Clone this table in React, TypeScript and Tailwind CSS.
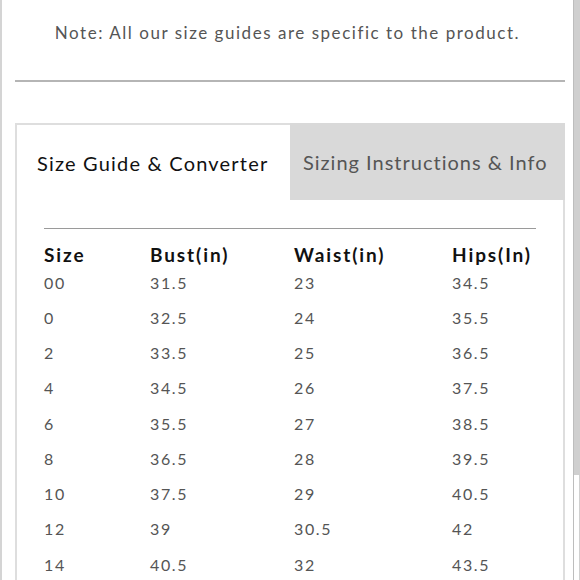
const rows: [string, string, string, string][] = [
  ["00", "31.5", "23", "34.5"],
  ["0", "32.5", "24", "35.5"],
  ["2", "33.5", "25", "36.5"],
  ["4", "34.5", "26", "37.5"],
  ["6", "35.5", "27", "38.5"],
  ["8", "36.5", "28", "39.5"],
  ["10", "37.5", "29", "40.5"],
  ["12", "39", "30.5", "42"],
  ["14", "40.5", "32", "43.5"],
];

const cols = "grid grid-cols-[106px_144px_158px_1fr]";

export default function App() {
  return (
    <div className="flex h-[580px] w-[580px] overflow-hidden bg-white font-['Lato',sans-serif]">
      <div className="flex-1 border-l-2 border-[#d4d4d4]">
        <p className="pt-[21px] text-center text-[17px] leading-[24px] tracking-[0.09em] text-[#555]">
          Note: All our size guides are specific to the product.
        </p>
        <div className="mt-[35px] ml-[13px] mr-[8px] h-[2px] bg-[#b5b5b5]" />

        <div className="mt-[41px] ml-[13px] mr-[8px]">
          <div className="flex h-[77px]">
            <div className="flex w-[275px] items-center border-t-2 border-l-2 border-[#dedede] pl-[20px] text-[20px] tracking-[0.06em] text-[#111]">
              Size Guide &amp; Converter
            </div>
            <div className="flex flex-1 items-center bg-[#d9d9d9] pl-[13px] text-[20px] tracking-[0.05em] text-[#555]">
              Sizing Instructions &amp; Info
            </div>
          </div>
          <div className="h-[400px] border-x-2 border-[#dedede] px-[27px] pt-[28px]">
            <div className="h-px bg-[#9a9a9a]" />
            <div className={`${cols} mt-[15px] text-[19px] font-bold leading-[21px] tracking-[0.1em] text-[#111]`}>
              <span>Size</span>
              <span>Bust(in)</span>
              <span>Waist(in)</span>
              <span>Hips(In)</span>
            </div>
            {rows.map((r) => (
              <div
                key={r[0]}
                className={`${cols} h-[35.25px] items-center text-[16px] tracking-[0.1em] text-[#555]`}
              >
                {r.map((c, i) => (
                  <span key={i}>{c}</span>
                ))}
              </div>
            ))}
          </div>
        </div>
      </div>

      <div className="flex w-[7px] flex-col border-l border-[#bdbdbd]">
        <div className="h-[475px] bg-[#cfcfcf]" />
        <div className="flex-1 border-r border-[#d0d0d0] bg-white" />
      </div>
    </div>
  );
}
